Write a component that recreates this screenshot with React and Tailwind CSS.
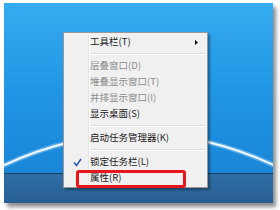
import React from 'react';

const items = [
  { type: 'item', label: '工具栏(T)', arrow: true },
  { type: 'sep' },
  { type: 'item', label: '层叠窗口(D)', disabled: true },
  { type: 'item', label: '堆叠显示窗口(T)', disabled: true },
  { type: 'item', label: '并排显示窗口(I)', disabled: true },
  { type: 'item', label: '显示桌面(S)' },
  { type: 'sep' },
  { type: 'item', label: '启动任务管理器(K)' },
  { type: 'sep' },
  { type: 'item', label: '锁定任务栏(L)', checked: true },
  { type: 'item', label: '属性(R)' },
];

function ContextMenu() {
  return (
    <div className="absolute z-10 left-[59px] top-[29px] w-[145px] bg-[#f0f0f0] border border-[#979797] py-[1px] shadow-[2px_2px_2px_rgba(0,0,0,0.35)]">
      {/* gutter line */}
      <div className="absolute left-[24px] top-[1px] bottom-[1px] w-[2px] border-l border-[#e2e3e3]">
        <div className="w-[1px] h-full bg-white" />
      </div>
      {items.map((it, i) =>
        it.type === 'sep' ? (
          <div key={i} className="h-[8px] flex flex-col justify-center pl-[27px] pr-[2px]">
            <div className="h-[1px] bg-[#e0e0e0]" />
            <div className="h-[1px] bg-white" />
          </div>
        ) : (
          <div key={i} className="relative h-[16px] flex items-center">
            <div className="w-[26px] flex items-center justify-center">
              {it.checked && (
                <svg width="9" height="9" viewBox="0 0 9 9">
                  <path d="M1 4.5 L3.5 7.5 L8 1" fill="none" stroke="#2457b8" strokeWidth="1.5" />
                </svg>
              )}
            </div>
            <span
              className={`text-[9.5px] leading-none ${it.disabled ? 'text-[#8d8d8d]' : 'text-[#1a1a1a]'}`}
            >
              {it.label}
            </span>
            {it.arrow && (
              <svg className="absolute right-[9px] top-[6px]" width="3" height="5" viewBox="0 0 3 5">
                <path d="M0 0 L3 2.5 L0 5 Z" fill="#000" />
              </svg>
            )}
          </div>
        )
      )}
      <div className="absolute left-[12px] top-[137px] w-[110px] h-[18px] border-[3px] border-[#e8141c] rounded-[3px]" />
    </div>
  );
}

export default function App() {
  return (
    <div
      className="w-[280px] h-[210px] bg-white pl-[4px] pt-[3px]"
      style={{ fontFamily: '"Noto Sans CJK SC", "Liberation Sans", sans-serif' }}
    >
      <div className="relative w-[269px] h-[200px] flex flex-col shadow-[3px_4px_4px_rgba(0,0,0,0.45)]">
        <div className="relative flex-1 bg-gradient-to-b from-[#35abf0] via-[#2196e4] to-[#1a86d8] overflow-hidden">
          <svg className="absolute inset-0" width="269" height="170" viewBox="0 0 269 170">
            <path d="M-10 167 Q 135 95 280 167" fill="none" stroke="#d8f0ff" strokeWidth="5" opacity="0.35" />
            <path d="M-10 167 Q 135 95 280 167" fill="none" stroke="#ffffff" strokeWidth="1.8" opacity="0.95" />
          </svg>
        </div>
        <div className="h-[30px] bg-gradient-to-b from-[#2f6ea6] to-[#285f94] border-t border-[#1b3f63]" />
        <ContextMenu />
      </div>
    </div>
  );
}
